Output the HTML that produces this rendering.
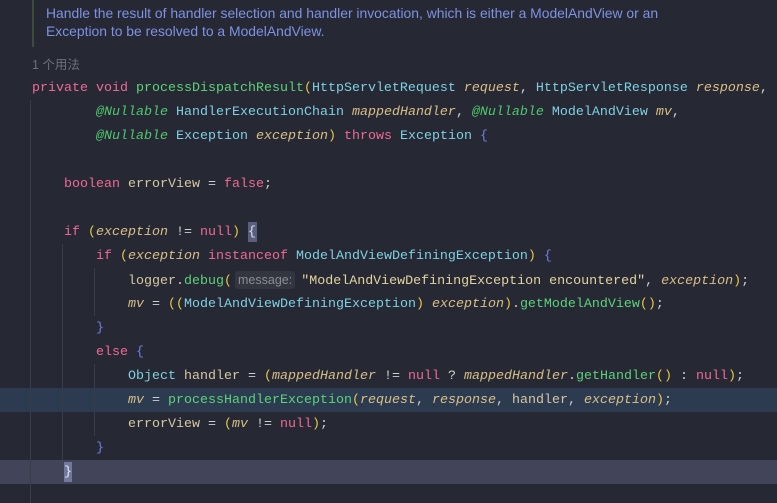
<!DOCTYPE html>
<html><head><meta charset="utf-8"><style>
body{margin:0;width:777px;height:503px;background:#262833;overflow:hidden;position:relative;font-family:"Liberation Mono",monospace;}
.l{position:absolute;left:0;height:24px;line-height:25px;font-size:13.33px;white-space:pre;color:#c9c3b0;}
.k{color:#ee6a96}.t{color:#7fd0e2}.f{color:#5cd27a}.p{color:#d9bf86;font-style:italic}.v{color:#d6c7a2}
.a{color:#4fc96d;font-style:italic}.s{color:#e3d39f}.y{color:#e6c84a}.b{color:#6c80e2}.o{color:#cfcfcf}
.hint{background:#33353f;color:#8a8d96;font-family:"Liberation Sans",sans-serif;font-size:12.5px;border-radius:3px;padding:2px 3px;margin:0 6px 0 3px;}
.g{position:absolute;width:1px;background:#3a3c47}
</style></head><body>
<div style="position:absolute;left:32px;top:0;width:2px;height:47px;background:#3e4a3c"></div>
<div style="position:absolute;left:46px;top:4px;font-family:'Liberation Sans',sans-serif;font-size:13.9px;line-height:18px;color:#7d92e3;white-space:nowrap">Handle the result of handler selection and handler invocation, which is either a ModelAndView or an<br>Exception to be resolved to a ModelAndView.</div>
<div style="position:absolute;left:32px;top:54px;font-family:'Liberation Sans','Noto Sans CJK SC',sans-serif;font-size:12.5px;color:#6c707b">1 个用法</div>
<div style="position:absolute;left:0;top:388px;width:777px;height:24px;background:#2d3b50"></div>
<div style="position:absolute;left:0;top:460px;width:777px;height:24px;background:#42455a"></div>
<div class="g" style="left:30px;top:100px;height:403px"></div>
<div class="g" style="left:62px;top:244px;height:216px"></div>
<div class="g" style="left:94px;top:268px;height:48px"></div>
<div class="g" style="left:94px;top:364px;height:72px"></div>
<div style="position:absolute;left:248px;top:222px;width:9px;height:20px;background:#5a5f80"></div>
<div style="position:absolute;left:64px;top:462px;width:8px;height:20px;background:#7078a0"></div>
<div class="l" style="top:76px;left:32px"><span class="k">private void</span> <span class="f">processDispatchResult</span><span class="y">(</span><span class="t">HttpServletRequest</span> <span class="p">request</span><span class="o">,</span> <span class="t">HttpServletResponse</span> <span class="p">response</span><span class="o">,</span></div>
<div class="l" style="top:100px;left:96px"><span class="a">@Nullable</span> <span class="t">HandlerExecutionChain</span> <span class="p">mappedHandler</span><span class="o">,</span> <span class="a">@Nullable</span> <span class="t">ModelAndView</span> <span class="p">mv</span><span class="o">,</span></div>
<div class="l" style="top:124px;left:96px"><span class="a">@Nullable</span> <span class="t">Exception</span> <span class="p">exception</span><span class="y">)</span> <span class="k">throws</span> <span class="t">Exception</span> <span class="b">{</span></div>
<div class="l" style="top:172px;left:64px"><span class="k">boolean</span> <span class="v">errorView</span> <span class="o">=</span> <span class="k">false</span><span class="o">;</span></div>
<div class="l" style="top:220px;left:64px"><span class="k">if</span> <span class="y">(</span><span class="p">exception</span> <span class="o">!=</span> <span class="k">null</span><span class="y">)</span> <span style="color:#e0e0ea">{</span></div>
<div class="l" style="top:244px;left:96px"><span class="k">if</span> <span class="y">(</span><span class="p">exception</span> <span class="k">instanceof</span> <span class="t">ModelAndViewDefiningException</span><span class="y">)</span> <span class="b">{</span></div>
<div class="l" style="top:268px;left:128px"><span class="v">logger</span><span class="o">.</span><span class="f">debug</span><span class="y">(</span><span class="hint">message:</span><span class="s">"ModelAndViewDefiningException encountered"</span><span class="o">,</span> <span class="p">exception</span><span class="y">)</span><span class="o">;</span></div>
<div class="l" style="top:292px;left:128px"><span class="p">mv</span> <span class="o">=</span> <span class="y">((</span><span class="t">ModelAndViewDefiningException</span><span class="y">)</span> <span class="p">exception</span><span class="y">)</span><span class="o">.</span><span class="f">getModelAndView</span><span class="y">()</span><span class="o">;</span></div>
<div class="l" style="top:316px;left:96px"><span class="b">}</span></div>
<div class="l" style="top:340px;left:96px"><span class="k">else</span> <span class="b">{</span></div>
<div class="l" style="top:364px;left:128px"><span class="t">Object</span> <span class="v">handler</span> <span class="o">=</span> <span class="y">(</span><span class="p">mappedHandler</span> <span class="o">!=</span> <span class="k">null</span> <span class="o">?</span> <span class="p">mappedHandler</span><span class="o">.</span><span class="f">getHandler</span><span class="y">()</span> <span class="o">:</span> <span class="k">null</span><span class="y">)</span><span class="o">;</span></div>
<div class="l" style="top:388px;left:128px"><span class="p">mv</span> <span class="o">=</span> <span class="f">processHandlerException</span><span class="y">(</span><span class="p">request</span><span class="o">,</span> <span class="p">response</span><span class="o">,</span> <span class="v">handler</span><span class="o">,</span> <span class="p">exception</span><span class="y">)</span><span class="o">;</span></div>
<div class="l" style="top:412px;left:128px"><span class="v">errorView</span> <span class="o">=</span> <span class="y">(</span><span class="p">mv</span> <span class="o">!=</span> <span class="k">null</span><span class="y">)</span><span class="o">;</span></div>
<div class="l" style="top:436px;left:96px"><span class="b">}</span></div>
<div class="l" style="top:460px;left:64px"><span style="color:#e8e8f0">}</span></div>
</body></html>
